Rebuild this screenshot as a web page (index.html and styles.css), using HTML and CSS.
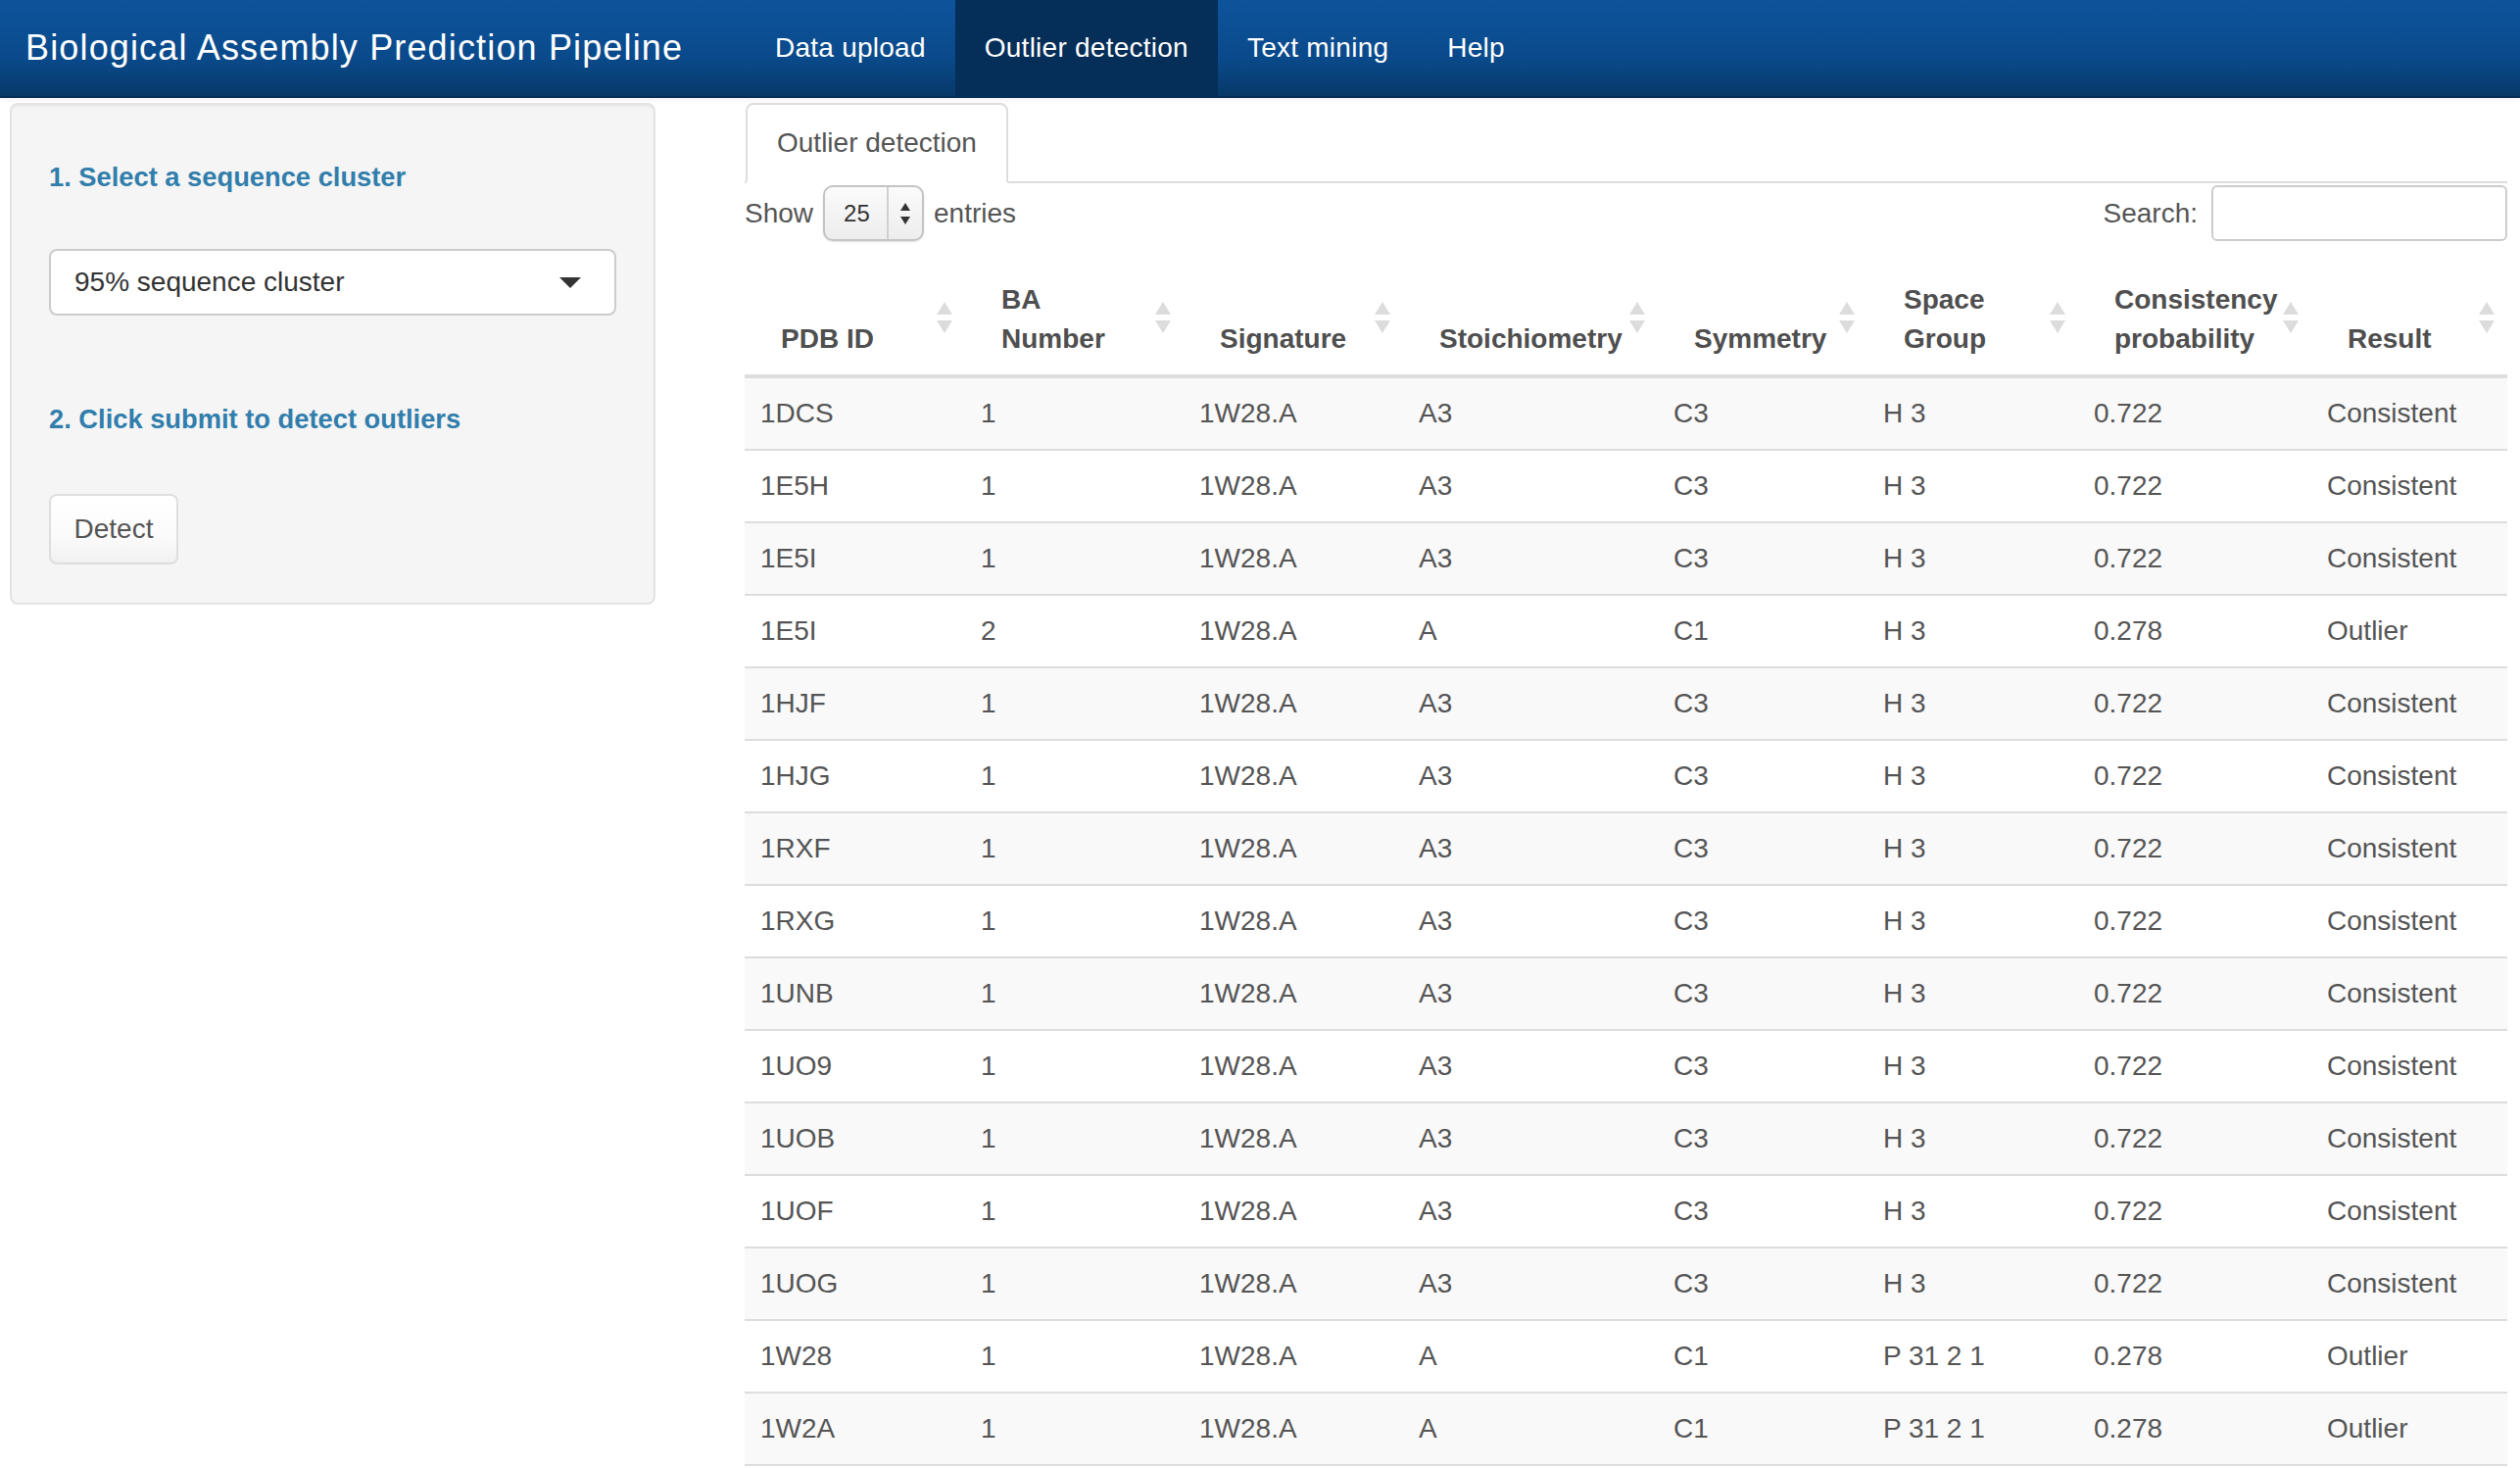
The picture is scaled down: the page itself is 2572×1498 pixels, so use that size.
FILE: index.html
```html
<!DOCTYPE html>
<html lang="en">
<head>
<meta charset="utf-8">
<title>Biological Assembly Prediction Pipeline</title>
<link rel="stylesheet" href="styles.css">
</head>
<body>
<nav class="navbar">
  <div class="brand">Biological Assembly Prediction Pipeline</div>
  <ul class="nav">
    <li class="nav-item"><a class="nav-link">Data upload</a></li>
    <li class="nav-item active"><a class="nav-link">Outlier detection</a></li>
    <li class="nav-item"><a class="nav-link">Text mining</a></li>
    <li class="nav-item"><a class="nav-link">Help</a></li>
  </ul>
</nav>
<div class="page">
  <aside class="well">
    <h5 class="step step-first">1. Select a sequence cluster</h5>
    <div class="select-box">
      <span class="select-text">95% sequence cluster</span>
      <svg class="caret" width="22" height="11" viewBox="0 0 22 11"><polygon points="0,0 22,0 11,11" fill="#333"/></svg>
    </div>
    <h5 class="step step-second">2. Click submit to detect outliers</h5>
    <button class="btn" type="button">Detect</button>
  </aside>
  <main class="main">
    <div class="tabs"><div class="tab">Outlier detection</div></div>
    <div class="dt-controls">
      <div class="length">Show
        <span class="mini-select"><span class="mini-val">25</span><span class="mini-arrows"><svg width="10" height="22" viewBox="0 0 10 22"><polygon points="5,0 10,8 0,8" fill="#333"/><polygon points="0,14 10,14 5,22" fill="#333"/></svg></span></span>
        entries</div>
      <div class="filter">Search:<span class="search-input"></span></div>
    </div>
    <table class="dt">
      <colgroup>
        <col class="c1"><col class="c2"><col class="c3"><col class="c4"><col class="c5"><col class="c6"><col class="c7"><col class="c8">
      </colgroup>
      <thead>
        <tr>
          <th>PDB ID<span class="sort"></span></th>
          <th>BA<br>Number<span class="sort"></span></th>
          <th>Signature<span class="sort"></span></th>
          <th>Stoichiometry<span class="sort"></span></th>
          <th>Symmetry<span class="sort"></span></th>
          <th>Space<br>Group<span class="sort"></span></th>
          <th>Consistency<br>probability<span class="sort"></span></th>
          <th>Result<span class="sort"></span></th>
        </tr>
      </thead>
      <tbody>
        <tr><td>1DCS</td><td>1</td><td>1W28.A</td><td>A3</td><td>C3</td><td>H 3</td><td>0.722</td><td>Consistent</td></tr>
        <tr><td>1E5H</td><td>1</td><td>1W28.A</td><td>A3</td><td>C3</td><td>H 3</td><td>0.722</td><td>Consistent</td></tr>
        <tr><td>1E5I</td><td>1</td><td>1W28.A</td><td>A3</td><td>C3</td><td>H 3</td><td>0.722</td><td>Consistent</td></tr>
        <tr><td>1E5I</td><td>2</td><td>1W28.A</td><td>A</td><td>C1</td><td>H 3</td><td>0.278</td><td>Outlier</td></tr>
        <tr><td>1HJF</td><td>1</td><td>1W28.A</td><td>A3</td><td>C3</td><td>H 3</td><td>0.722</td><td>Consistent</td></tr>
        <tr><td>1HJG</td><td>1</td><td>1W28.A</td><td>A3</td><td>C3</td><td>H 3</td><td>0.722</td><td>Consistent</td></tr>
        <tr><td>1RXF</td><td>1</td><td>1W28.A</td><td>A3</td><td>C3</td><td>H 3</td><td>0.722</td><td>Consistent</td></tr>
        <tr><td>1RXG</td><td>1</td><td>1W28.A</td><td>A3</td><td>C3</td><td>H 3</td><td>0.722</td><td>Consistent</td></tr>
        <tr><td>1UNB</td><td>1</td><td>1W28.A</td><td>A3</td><td>C3</td><td>H 3</td><td>0.722</td><td>Consistent</td></tr>
        <tr><td>1UO9</td><td>1</td><td>1W28.A</td><td>A3</td><td>C3</td><td>H 3</td><td>0.722</td><td>Consistent</td></tr>
        <tr><td>1UOB</td><td>1</td><td>1W28.A</td><td>A3</td><td>C3</td><td>H 3</td><td>0.722</td><td>Consistent</td></tr>
        <tr><td>1UOF</td><td>1</td><td>1W28.A</td><td>A3</td><td>C3</td><td>H 3</td><td>0.722</td><td>Consistent</td></tr>
        <tr><td>1UOG</td><td>1</td><td>1W28.A</td><td>A3</td><td>C3</td><td>H 3</td><td>0.722</td><td>Consistent</td></tr>
        <tr><td>1W28</td><td>1</td><td>1W28.A</td><td>A</td><td>C1</td><td>P 31 2 1</td><td>0.278</td><td>Outlier</td></tr>
        <tr><td>1W2A</td><td>1</td><td>1W28.A</td><td>A</td><td>C1</td><td>P 31 2 1</td><td>0.278</td><td>Outlier</td></tr>
      </tbody>
    </table>
  </main>
</div>
</body>
</html>
```
FILE: styles.css
```css
html, body {
  margin: 0;
  padding: 0;
  overflow: hidden;
}
body {
  font-family: "Liberation Sans", Arial, Helvetica, sans-serif;
  color: #555;
  background: #fff;
  width: 2572px;
}
* { box-sizing: border-box; }

/* ---------- navbar ---------- */
.navbar {
  display: flex;
  align-items: stretch;
  height: 100px;
  background-image: linear-gradient(#0d549c, #0a4a8b 60%, #073968);
  border-bottom: 2px solid #062e56;
  box-shadow: 0 2px 5px rgba(0, 0, 0, 0.06);
}
.brand {
  flex: 0 0 761px;
  padding-left: 26px;
  display: flex;
  align-items: center;
  color: #fff;
  font-size: 36px;
  letter-spacing: 1.15px;
  white-space: nowrap;
}
.nav {
  display: flex;
  list-style: none;
  margin: 0;
  padding: 0;
}
.nav-item {
  display: flex;
}
.nav-link {
  display: flex;
  align-items: center;
  padding: 0 30px;
  color: #fff;
  font-size: 28px;
  letter-spacing: 0.25px;
  white-space: nowrap;
}
.nav-item.active .nav-link {
  background: #052e58;
}

/* ---------- page ---------- */
.page {
  display: flex;
  align-items: flex-start;
  padding-top: 5px;
}

.well {
  margin-left: 10px;
  width: 659px;
  flex: 0 0 659px;
  background: #f5f5f5;
  border: 2px solid #e3e3e3;
  border-radius: 8px;
  box-shadow: inset 0 2px 2px rgba(0, 0, 0, 0.05);
  padding: 54px 38px 39px 38px;
}
.step {
  margin: 0;
  font-size: 27.3px;
  line-height: 40px;
  font-weight: bold;
  color: #317eac;
  white-space: nowrap;
}
.step-first { margin-bottom: 53px; }
.step-second { margin-top: 86px; margin-bottom: 56px; }

.select-box {
  display: flex;
  align-items: center;
  justify-content: space-between;
  height: 68px;
  background: #fff;
  border: 2px solid #ccc;
  border-radius: 8px;
  padding: 0 34px 0 24px;
  font-size: 28px;
  color: #333;
}
.caret { display: block; }

.btn {
  display: block;
  width: 132px;
  height: 72px;
  font-family: inherit;
  font-size: 28px;
  color: #555;
  background-image: linear-gradient(#fff, #fbfbfb 60%, #f1f1f1);
  border: 2px solid #dedede;
  border-radius: 8px;
  padding: 0;
}

/* ---------- main ---------- */
.main {
  margin-left: 91px;
  width: 1799px;
  flex: 0 0 1799px;
}
.tabs {
  display: flex;
  border-bottom: 2px solid #ddd;
}
.tab {
  margin-left: 1px;
  margin-bottom: -2px;
  height: 82px;
  padding: 0 30px;
  display: flex;
  align-items: center;
  font-size: 28px;
  color: #555;
  background: #fff;
  border: 2px solid #ddd;
  border-bottom-color: #fff;
  border-radius: 8px 8px 0 0;
}

.dt-controls {
  display: flex;
  justify-content: space-between;
  align-items: center;
  margin-top: 2px;
  height: 57px;
  font-size: 28px;
  color: #555;
}
.length {
  display: flex;
  align-items: center;
}
.mini-select {
  display: inline-flex;
  margin: 0 10px;
  width: 103px;
  height: 57px;
  border: 2px solid #c4c4c4;
  border-radius: 10px;
  background-image: linear-gradient(#fbfbfb, #ededed);
  box-shadow: 0 1px 2px rgba(0, 0, 0, 0.12);
}
.mini-val {
  width: 65px;
  display: flex;
  align-items: center;
  padding-left: 19px;
  font-size: 24px;
  color: #333;
  border-right: 2px solid #d0d0d0;
}
.mini-arrows {
  flex: 1;
  display: flex;
  align-items: center;
  justify-content: center;
}
.mini-arrows svg { display: block; }

.filter {
  display: flex;
  align-items: center;
}
.search-input {
  display: block;
  margin-left: 14px;
  width: 302px;
  height: 57px;
  border: 2px solid #ccc;
  border-radius: 6px;
  background: #fff;
}

/* ---------- table ---------- */
.dt {
  margin-top: 16px;
  width: 1799px;
  table-layout: fixed;
  border-collapse: collapse;
  border-bottom: 2px solid #ddd;
  font-size: 28px;
  line-height: 40px;
}
.c1 { width: 225px; }
.c2 { width: 223px; }
.c3 { width: 224px; }
.c4 { width: 260px; }
.c5 { width: 214px; }
.c6 { width: 215px; }
.c7 { width: 238px; }
.c8 { width: 200px; }

.dt th {
  position: relative;
  text-align: left;
  vertical-align: bottom;
  font-weight: bold;
  color: #4f4f4f;
  padding: 24px 8px 16px 37px;
  border-bottom: 4px solid #ddd;
  white-space: nowrap;
}
.sort {
  position: absolute;
  right: 13px;
  top: 50%;
  margin-top: -14px;
  width: 16px;
  height: 32px;
}
.sort::before,
.sort::after {
  content: "";
  position: absolute;
  left: 0;
  border-left: 8px solid transparent;
  border-right: 8px solid transparent;
}
.sort::before {
  top: 0;
  border-bottom: 13px solid #dcdcdc;
}
.sort::after {
  bottom: 0;
  border-top: 13px solid #dcdcdc;
}

.dt td {
  padding: 16px 16px;
  border-top: 2px solid #ddd;
  color: #555;
  white-space: nowrap;
}
.dt tbody tr:nth-child(odd) td {
  background: #f9f9f9;
}
```
